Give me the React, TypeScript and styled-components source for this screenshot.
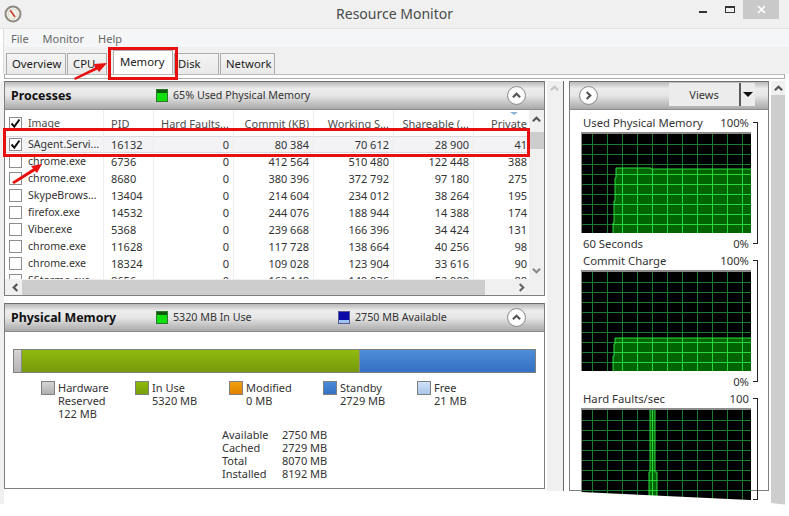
import React from "react";
import styled, { createGlobalStyle } from "styled-components";

const GlobalStyle = createGlobalStyle`
  html, body {
    margin: 0;
    padding: 0;
    background: #fff;
  }
  * { box-sizing: border-box; }
`;

// Styles

const Page = styled.div`
  position: relative;
  width: 789px;
  height: 516px;
  overflow: hidden;
  background: #fff;
  color: #1c1c1c;
  font-family: "Noto Sans", "Open Sans", sans-serif;
  font-size: 11px;
  line-height: 13px;
`;

const TitleBar = styled.div`
  position: relative;
  height: 29px;
  background: #f0f0f0;
  display: flex;
  align-items: center;
  justify-content: center;
  border-bottom: 1px solid #e2e2e2;
`;

const AppIcon = styled.svg`
  position: absolute;
  left: 4px;
  top: 5px;
`;

const Title = styled.div`
  font-size: 14px;
  color: #4a4a4a;
  margin-top: -2px;
`;

const WindowControls = styled.div`
  position: absolute;
  top: 0;
  right: 10px;
  display: flex;
  align-items: flex-start;
`;

const MinButton = styled.div`
  width: 8px;
  height: 2px;
  margin: 11px 18px 0 0;
  background: #333;
`;

const MaxButton = styled.div`
  width: 10px;
  height: 7px;
  margin: 6px 8px 0 0;
  border: 1px solid #333;
  border-top-width: 2px;
`;

const CloseButton = styled.div`
  width: 36px;
  height: 19px;
  background: #c9c9c9;
  color: #fff;
  display: flex;
  align-items: center;
  justify-content: center;
`;

const MenuBar = styled.div`
  height: 18px;
  margin-left: 3px;
  padding-left: 7px;
  background: #f5f6f7;
  display: flex;
  align-items: center;
  gap: 14px;
  color: #666;
  border-left: 1px solid #ddd;
`;

const TabBar = styled.div`
  height: 27px;
  padding: 5px 0 0 2px;
  margin-left: 3px;
  display: flex;
  align-items: flex-end;
  background: #f0f0f0;
  border-left: 1px solid #ddd;
  font-size: 11.3px;
`;

const Tab = styled.div<{ $active?: boolean; $width: number; $inset: number }>`
  width: ${(p) => p.$width}px;
  height: ${(p) => (p.$active ? 24 : 21)}px;
  margin-right: 1px;
  margin-left: ${(p) => (p.$active ? 5 : 0)}px;
  padding: 0 0 ${(p) => (p.$active ? 2 : 1)}px ${(p) => p.$inset}px;
  display: flex;
  align-items: center;
  border: 1px solid #acacac;
  border-bottom: none;
  background: ${(p) => (p.$active ? "#fff" : "linear-gradient(#f4f4f4, #e9e9e9)")};
  color: #222;
`;

const TabEdge = styled.div`
  height: 5px;
  margin: 0 4px 0 4px;
  background: #fff;
  border: 1px solid #acacac;
  border-top-color: #bbb;
`;

const Main = styled.div`
  display: flex;
  height: 423px;
  margin-top: 2px;
  padding-left: 4px;
  background: linear-gradient(90deg, #f0f0f0 0 4px, #fff 4px);
`;

const LeftColumn = styled.div`
  width: 541px;
  display: flex;
  flex-direction: column;
  gap: 7px;
`;

const Panel = styled.section`
  border: 1px solid #7f7f7f;
  border-top: none;
  background: #fff;
  display: flex;
  flex-direction: column;
`;

const PanelHeader = styled.header`
  position: relative;
  height: 29px;
  flex: none;
  display: flex;
  align-items: center;
  padding-left: 6px;
  border-top: 1px solid #6e6e6e;
  border-bottom: 1px solid #8c8c8c;
  background: linear-gradient(#b9b9b9 0%, #ececec 25%, #e6e6e6 50%, #a9a9a9 100%);
`;

const PanelTitle = styled.h2`
  margin: 0;
  width: 145px;
  font-size: 12.4px;
  line-height: 16px;
  font-weight: 700;
  color: #111;
`;

const Indicator = styled.div<{ $width?: number }>`
  display: flex;
  align-items: center;
  gap: 5px;
  width: ${(p) => p.$width ?? 182}px;
  color: #333;
  font-size: 10.7px;
`;

const Swatch = styled.div<{ $kind: "green" | "blue" }>`
  width: 12px;
  height: 13px;
  border: 1px solid ${(p) => (p.$kind === "green" ? "#2a7a2a" : "#5a5a9a")};
  background: ${(p) =>
    p.$kind === "green"
      ? "linear-gradient(#0c5a0c 0 3px, #10e010 3px)"
      : "linear-gradient(#0a0aa8 0 8px, #9cc4f0 8px)"};
`;

const RoundButton = styled.div<{ $side: "left" | "right" }>`
  position: absolute;
  top: 4px;
  ${(p) => (p.$side === "right" ? "right: 18px;" : "left: 9px;")}
  width: 19px;
  height: 19px;
  border-radius: 50%;
  border: 1px solid #8f8f8f;
  background: radial-gradient(circle, #fff 55%, #d8d8d8);
  display: flex;
  align-items: center;
  justify-content: center;
`;

const TableArea = styled.div`
  display: flex;
  height: 169px;
  overflow: hidden;
`;

const TableBody = styled.div`
  width: 524px;
  overflow: hidden;
`;

const Row = styled.div<{ $header?: boolean; $selected?: boolean }>`
  display: grid;
  grid-template-columns: 99px 50px 80px 80px 80px 80px 55px;
  height: ${(p) => (p.$header ? 26 : 17)}px;
  background: ${(p) => (p.$selected ? "#f3f3f6" : "#fff")};
  ${(p) => p.$selected && "box-shadow: inset 0 1px 0 #d9d9e2, inset 0 -1px 0 #d9d9e2;"}
`;

const Cell = styled.div<{ $right?: boolean }>`
  display: flex;
  align-items: center;
  justify-content: ${(p) => (p.$right ? "flex-end" : "flex-start")};
  padding: 0 ${(p) => (p.$right ? 4 : 2)}px 0 7px;
  border-right: 1px solid #ececf2;
  white-space: nowrap;
  overflow: hidden;
  color: #333;

  &:first-child {
    padding-left: 4px;
    font-size: 10.6px;
  }

  &:last-child {
    border-right: none;
    padding-right: 2px;
  }
`;

const HeaderCell = styled(Cell)`
  position: relative;
  color: #4d4d4d;
  padding-top: 1px;
  padding-left: 7px;
`;

const SortMark = styled.div`
  position: absolute;
  top: 2px;
  left: 36px;
  border-left: 4px solid transparent;
  border-right: 4px solid transparent;
  border-top: 3px solid #8ab4d8;
`;

const CheckBox = styled.div`
  width: 13px;
  height: 13px;
  flex: none;
  margin: 0 6px 0 0;
  border: 1px solid #8e8e8e;
  background: #fff;
  display: flex;
  align-items: center;
  justify-content: center;
`;

const VScroll = styled.div`
  width: 15px;
  flex: none;
  display: flex;
  flex-direction: column;
  align-items: center;
  background: #f0f0f0;
`;

const VThumb = styled.div`
  align-self: stretch;
  height: 17px;
  margin: 4px 0 auto;
  background: #cdcdcd;
`;

const ArrowCap = styled.div`
  height: 18px;
  display: flex;
  align-items: center;
  justify-content: center;
`;

const HScroll = styled.div`
  height: 16px;
  display: flex;
  align-items: center;
  background: #f0f0f0;
`;

const HThumb = styled.div`
  width: 463px;
  height: 15px;
  background: #cdcdcd;
`;

const HCap = styled.div`
  width: 17px;
  display: flex;
  justify-content: center;
  padding-left: 3px;
`;

const HEnd = styled(HCap)`
  margin-left: auto;
  margin-right: 16px;
`;

const MemoryBody = styled.div`
  height: 156px;
  padding: 17px 8px 0 8px;
`;

const MemoryBar = styled.div`
  height: 24px;
  display: flex;
  border: 1px solid #808080;
`;

const BarPart = styled.div<{ $fill: string; $width?: number }>`
  ${(p) => (p.$width ? `width: ${p.$width}px; flex: none;` : "flex: 1;")}
  background: ${(p) => p.$fill};
  border-right: 1px solid #8a8a8a;

  &:last-child {
    border-right: none;
  }
`;

const Legend = styled.div`
  display: grid;
  grid-template-columns: repeat(5, 94px);
  margin: 8px 0 0 28px;
`;

const LegendItem = styled.div`
  display: flex;
  gap: 3px;
`;

const LegendSwatch = styled.div<{ $fill: string }>`
  width: 14px;
  height: 14px;
  flex: none;
  border: 1px solid #808080;
  background: ${(p) => p.$fill};
`;

const LegendText = styled.div`
  white-space: pre-line;
  color: #333;
`;

const Stats = styled.div`
  display: grid;
  grid-template-columns: 60px 43px;
  margin: 8px 0 0 209px;
  color: #333;
`;

const StatValue = styled.div`
  text-align: right;
  white-space: nowrap;
`;

const Splitter = styled.div`
  width: 17px;
  height: 410px;
  margin-left: 2px;
  flex: none;
  display: flex;
  justify-content: center;
  padding: 3px 1px 0 0;
  background: #f0f0f0;
  border-right: 1px solid #6a6a6a;
`;

const RightPane = styled.section`
  width: 200px;
  height: 410px;
  margin-left: 5px;
  flex: none;
  display: flex;
  flex-direction: column;
  border: 1px solid #7f7f7f;
  border-top: none;
`;

const ViewsButton = styled.div`
  position: absolute;
  top: 1px;
  right: 13px;
  width: 86px;
  height: 23px;
  display: flex;
  align-items: center;
  background: #ececec;
  color: #333;
`;

const ViewsLabel = styled.span`
  width: 72px;
  height: 100%;
  display: flex;
  align-items: center;
  justify-content: center;
  border-right: 2px solid #5c5c5c;
`;

const ViewsCaret = styled.span`
  margin-left: 2px;
  border-left: 5px solid transparent;
  border-right: 5px solid transparent;
  border-top: 5px solid #111;
`;

const ChartList = styled.div`
  padding: 2px 0 0 11px;
  display: flex;
  flex-direction: column;
`;

const ChartBlock = styled.div`
  position: relative;
  width: 187px;

  & + & {
    margin-top: -3px;
  }
`;

const ChartLabels = styled.div`
  width: 168px;
  height: 20px;
  display: flex;
  align-items: center;
  justify-content: space-between;
  padding-left: 2px;
  color: #333;
  font-size: 11.3px;
`;

const ChartFrame = styled.svg`
  display: block;
  border-top: 2px solid #8c8c8c;
  border-left: 1px solid #8c8c8c;
`;

const Bracket = styled.div`
  position: absolute;
  top: 10px;
  bottom: 9px;
  left: 172px;
  width: 5px;
  border: 1px solid #222;
  border-left: none;
`;

const RightScroll = styled.div`
  width: 14px;
  height: 440px;
  margin-left: 2px;
  flex: none;
  display: flex;
  flex-direction: column;
  background: #cdcdcd;
`;

const RightScrollCap = styled(ArrowCap)`
  height: 14px;
  background: #f0f0f0;
`;

const Overlay = styled.svg`
  position: absolute;
  left: 0;
  top: 0;
  pointer-events: none;
`;

// ================================

const Chevron: React.FC<{ dir: "up" | "down" | "left" | "right"; size?: number; color?: string }> = ({
  dir,
  size = 9,
  color = "#555",
}) => {
  const points = {
    up: "1,7 5,3 9,7",
    down: "1,3 5,7 9,3",
    left: "7,1 3,5 7,9",
    right: "3,1 7,5 3,9",
  }[dir];
  return (
    <svg width={size} height={size} viewBox="0 0 10 10">
      <polyline points={points} fill="none" stroke={color} strokeWidth="2.4" />
    </svg>
  );
};

const Tick: React.FC = () => (
  <svg width="11" height="11" viewBox="0 0 11 11">
    <polyline points="1.5,5.5 4.3,8.6 9.5,1.5" fill="none" stroke="#111" strokeWidth="2" />
  </svg>
);

const processes = [
  ["SAgent.Servi...", "16132", "0", "80 384", "70 612", "28 900", "41"],
  ["chrome.exe", "6736", "0", "412 564", "510 480", "122 448", "388"],
  ["chrome.exe", "8680", "0", "380 396", "372 792", "97 180", "275"],
  ["SkypeBrows...", "13404", "0", "214 604", "234 012", "38 264", "195"],
  ["firefox.exe", "14532", "0", "244 076", "188 944", "14 388", "174"],
  ["Viber.exe", "5368", "0", "239 668", "166 396", "34 424", "131"],
  ["chrome.exe", "11628", "0", "117 728", "138 664", "40 256", "98"],
  ["chrome.exe", "18324", "0", "109 028", "123 904", "33 616", "90"],
  ["SStorme.exe", "8656", "0", "163 148", "149 936", "52 988", "88"],
];

const legend = [
  { label: "Hardware\nReserved\n122 MB", fill: "linear-gradient(#d4d4d4, #b0b0b0)" },
  { label: "In Use\n5320 MB", fill: "linear-gradient(#8db90c, #7a9f08)" },
  { label: "Modified\n0 MB", fill: "linear-gradient(#f0a010, #e08000)" },
  { label: "Standby\n2729 MB", fill: "linear-gradient(#4a8ad8, #3470c4)" },
  { label: "Free\n21 MB", fill: "linear-gradient(#cfe0f6, #a9c6ea)" },
];

const stats = [
  ["Available", "2750 MB"],
  ["Cached", "2729 MB"],
  ["Total", "8070 MB"],
  ["Installed", "8192 MB"],
];

const VLINES = [10, 25, 40, 55, 70, 85, 100, 115, 130, 145, 160];
const HLINES = [10, 20, 30, 40, 50, 60, 70, 80, 90];

const Chart: React.FC<{ id: string; area: string; height?: number }> = ({ id, area, height = 100 }) => (
  <ChartFrame width={170} height={height + 1}>
    <defs>
      <clipPath id={id}>
        <polygon points={area} />
      </clipPath>
    </defs>
    <rect width="170" height={height} fill="#000" />
    <polygon points={area} fill="#006400" />
    <g stroke="#1d7a2c" strokeWidth="1">
      {VLINES.map((x) => (
        <line key={x} x1={x + 0.5} y1="0" x2={x + 0.5} y2={height} />
      ))}
      {HLINES.map((y) => (
        <line key={y} x1="0" y1={y + 0.5} x2="170" y2={y + 0.5} />
      ))}
    </g>
    <g stroke="#27d83a" strokeWidth="1" clipPath={`url(#${id})`}>
      {VLINES.map((x) => (
        <line key={x} x1={x + 0.5} y1="0" x2={x + 0.5} y2={height} />
      ))}
      {HLINES.map((y) => (
        <line key={y} x1="0" y1={y + 0.5} x2="170" y2={y + 0.5} />
      ))}
    </g>
    <polyline points={area} fill="none" stroke="#2fdc42" strokeWidth="1" />
  </ChartFrame>
);

const App: React.FC = (): JSX.Element => {
  return (
    <Page>
      <GlobalStyle />
      <TitleBar>
        <AppIcon width="18" height="18" viewBox="0 0 18 18">
          <circle cx="9" cy="9" r="7.5" fill="#f4f1ea" stroke="#8d8a80" strokeWidth="2" />
          <line x1="6" y1="5" x2="11" y2="12" stroke="#c0392b" strokeWidth="1.6" />
          <circle cx="9" cy="9" r="4.8" fill="none" stroke="#cfcabd" strokeWidth="0.6" />
        </AppIcon>
        <Title>Resource Monitor</Title>
        <WindowControls>
          <MinButton />
          <MaxButton />
          <CloseButton>
            <svg width="9" height="9" viewBox="0 0 9 9">
              <path d="M1 1 L8 8 M8 1 L1 8" stroke="#fff" strokeWidth="1.6" />
            </svg>
          </CloseButton>
        </WindowControls>
      </TitleBar>
      <MenuBar>
        <span>File</span>
        <span>Monitor</span>
        <span>Help</span>
      </MenuBar>
      <TabBar>
        <Tab $width={60} $inset={5}>
          Overview
        </Tab>
        <Tab $width={40} $inset={5}>
          CPU
        </Tab>
        <Tab $width={60} $inset={6} $active>
          Memory
        </Tab>
        <Tab $width={45} $inset={3}>
          Disk
        </Tab>
        <Tab $width={55} $inset={5}>
          Network
        </Tab>
      </TabBar>
      <TabEdge />
      <Main>
        <LeftColumn>
          <Panel>
            <PanelHeader>
              <PanelTitle>Processes</PanelTitle>
              <Indicator>
                <Swatch $kind="green" />
                65% Used Physical Memory
              </Indicator>
              <RoundButton $side="right">
                <Chevron dir="up" />
              </RoundButton>
            </PanelHeader>
            <TableArea>
              <TableBody>
                <Row $header>
                  <HeaderCell>
                    <CheckBox>
                      <Tick />
                    </CheckBox>
                    Image
                  </HeaderCell>
                  <HeaderCell>PID</HeaderCell>
                  <HeaderCell>Hard Faults...</HeaderCell>
                  <HeaderCell $right>Commit (KB)</HeaderCell>
                  <HeaderCell $right>Working S...</HeaderCell>
                  <HeaderCell $right>Shareable (...</HeaderCell>
                  <HeaderCell $right>
                    <SortMark />
                    Private
                  </HeaderCell>
                </Row>
                {processes.map((proc, i) => (
                  <Row key={proc[1]} $selected={i === 0}>
                    <Cell>
                      <CheckBox>{i === 0 ? <Tick /> : null}</CheckBox>
                      {proc[0]}
                    </Cell>
                    <Cell>{proc[1]}</Cell>
                    {proc.slice(2).map((value, j) => (
                      <Cell key={j} $right>
                        {value}
                      </Cell>
                    ))}
                  </Row>
                ))}
              </TableBody>
              <VScroll>
                <ArrowCap>
                  <Chevron dir="up" />
                </ArrowCap>
                <VThumb />
                <ArrowCap>
                  <Chevron dir="down" color="#888" />
                </ArrowCap>
              </VScroll>
            </TableArea>
            <HScroll>
              <HCap>
                <Chevron dir="left" />
              </HCap>
              <HThumb />
              <HEnd>
                <Chevron dir="right" color="#666" />
              </HEnd>
            </HScroll>
          </Panel>
          <Panel>
            <PanelHeader>
              <PanelTitle>Physical Memory</PanelTitle>
              <Indicator>
                <Swatch $kind="green" />
                5320 MB In Use
              </Indicator>
              <Indicator>
                <Swatch $kind="blue" />
                2750 MB Available
              </Indicator>
              <RoundButton $side="right">
                <Chevron dir="up" />
              </RoundButton>
            </PanelHeader>
            <MemoryBody>
              <MemoryBar>
                <BarPart $width={8} $fill="linear-gradient(#d4d4d4, #b4b4b4)" />
                <BarPart $width={338} $fill="linear-gradient(#8fbb0e, #76990a)" />
                <BarPart $fill="linear-gradient(#4f8ed8, #3470c4)" />
              </MemoryBar>
              <Legend>
                {legend.map((item) => (
                  <LegendItem key={item.label}>
                    <LegendSwatch $fill={item.fill} />
                    <LegendText>{item.label}</LegendText>
                  </LegendItem>
                ))}
              </Legend>
              <Stats>
                {stats.map(([label, value]) => (
                  <React.Fragment key={label}>
                    <div>{label}</div>
                    <StatValue>{value}</StatValue>
                  </React.Fragment>
                ))}
              </Stats>
            </MemoryBody>
          </Panel>
        </LeftColumn>
        <Splitter>
          <Chevron dir="up" color="#c4c4c4" />
        </Splitter>
        <RightPane>
          <PanelHeader>
            <RoundButton $side="left">
              <Chevron dir="right" />
            </RoundButton>
            <ViewsButton>
              <ViewsLabel>Views</ViewsLabel>
              <ViewsCaret />
            </ViewsButton>
          </PanelHeader>
          <ChartList>
            <ChartBlock>
              <ChartLabels>
                <span>Used Physical Memory</span>
                <span>100%</span>
              </ChartLabels>
              <Chart
                id="used"
                area="31,100 31,89 32,89 32,67 33,67 33,44 34,44 34,34 69,34 69,35 170,35 170,100"
              />
              <ChartLabels>
                <span>60 Seconds</span>
                <span>0%</span>
              </ChartLabels>
              <Bracket />
            </ChartBlock>
            <ChartBlock>
              <ChartLabels>
                <span>Commit Charge</span>
                <span>100%</span>
              </ChartLabels>
              <Chart id="commit" area="31,100 31,84 32,84 32,72 33,72 33,66 34,66 170,66 170,100" />
              <ChartLabels>
                <span />
                <span>0%</span>
              </ChartLabels>
              <Bracket />
            </ChartBlock>
            <ChartBlock>
              <ChartLabels>
                <span>Hard Faults/sec</span>
                <span>100</span>
              </ChartLabels>
              <Chart id="faults" area="68,0 68,62 67,62 67,100 75,100 75,62 73,62 73,0" />
              <Bracket />
            </ChartBlock>
          </ChartList>
        </RightPane>
        <RightScroll>
          <RightScrollCap>
            <Chevron dir="up" />
          </RightScrollCap>
        </RightScroll>
      </Main>

      {/* red annotations and the torn bottom edge lie over the window */}
      <Overlay width="789" height="516" viewBox="0 0 789 516">
        <polygon points="546,491 560,491 581,492 750,500 771,503 789,505 789,516 546,516" fill="#fff" />
        <rect x="4.5" y="129.5" width="524" height="26" fill="none" stroke="#e80f0f" strokeWidth="3" />
        <rect x="109.5" y="48.5" width="67" height="30" fill="none" stroke="#e80f0f" strokeWidth="3" />
        <polygon points="74,78 95,67.5 94,64 107,63 99,72 97.5,69.5 75,80" fill="#e80f0f" />
        <polygon points="12,182 33,168.5 31,166 42,164 37,173 35,171 14,184" fill="#e80f0f" />
      </Overlay>
    </Page>
  );
};

export default App;
